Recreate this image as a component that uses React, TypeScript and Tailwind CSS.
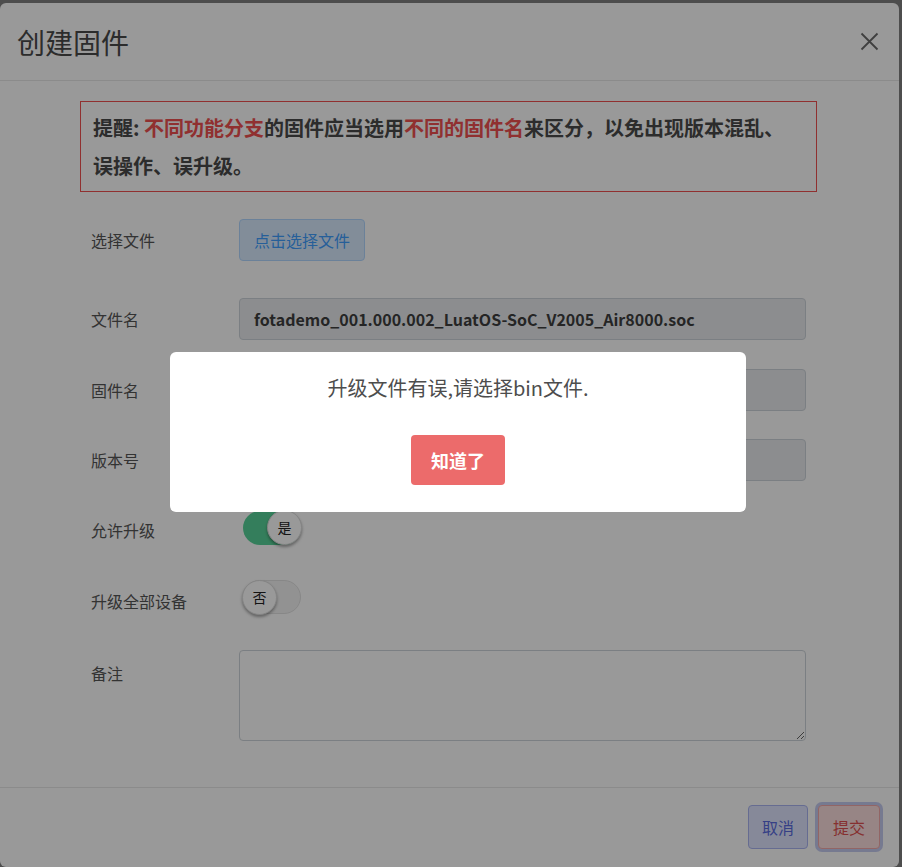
import { useState } from "react";

const rowLabel = "w-[148px] shrink-0 text-[16px] text-[#555]";

type ToggleProps = {
  on: boolean;
  text: string;
};

const Toggle = ({ on, text }: ToggleProps) => {
  return (
    <div
      className={`relative ml-[4px] h-[34px] w-[58px] rounded-full ${
        on ? "bg-[#58d399]" : "border border-[#e2e2e2] bg-[#f4f4f4]"
      }`}
    >
      <div
        className={`absolute top-[-1px] flex h-[35px] w-[35px] items-center justify-center rounded-full border border-[#dcdcdc] bg-white text-[14px] text-[#222] shadow-[0_2px_3px_rgba(0,0,0,0.35)] ${
          on ? "right-[-1px]" : "left-[-2px]"
        }`}
      >
        {text}
      </div>
    </div>
  );
};

const App = () => {
  const [note, setNote] = useState("");

  return (
    <div className="relative h-[867px] w-[902px] overflow-hidden bg-[#808080] font-['Noto_Sans_CJK_SC',sans-serif]">
      {/* modal */}
      <div className="mt-[3px] flex h-[864px] w-[899px] flex-col rounded-[6px] bg-white">
        <div className="flex h-[78px] shrink-0 items-center justify-between border-b border-[#e8e8e8] pl-[17px] pr-[20px]">
          <h4 className="text-[28px] leading-none text-[#4a4a4a]">创建固件</h4>
          <svg width="19" height="19" viewBox="0 0 19 19" className="text-[#6a6a6a]">
            <path d="M1.5 1.5 L17.5 17.5 M17.5 1.5 L1.5 17.5" stroke="currentColor" strokeWidth="1.8" fill="none" />
          </svg>
        </div>

        <div className="flex-1 pl-[80px] pr-[82px] pt-[20px]">
          <div className="border border-[#f05050] pb-[6px] pl-[12px] pr-[20px] pt-[7px] text-[20px] font-bold leading-[38px] text-[#4a4a4a]">
            提醒: <span className="text-[#f05050]">不同功能分支</span>的固件应当选用
            <span className="text-[#f05050]">不同的固件名</span>来区分，以免出现版本混乱、误操作、误升级。
          </div>

          <div className="px-[11px]">
            <div className="mt-[27px] flex h-[42px] items-center">
              <label className={rowLabel}>选择文件</label>
              <button className="h-[42px] rounded-[4px] border border-[#b3d8ff] bg-[#d9ecff] px-[14px] text-[16px] text-[#409eff]">
                点击选择文件
              </button>
            </div>

            <div className="mt-[37px] flex h-[42px] items-center">
              <label className={rowLabel}>文件名</label>
              <input
                readOnly
                value="fotademo_001.000.002_LuatOS-SoC_V2005_Air8000.soc"
                className="h-[42px] flex-1 rounded-[4px] border border-[#ced4da] bg-[#e9ecef] px-[14px] text-[16px] font-bold text-[#3f3f3f] outline-none"
              />
            </div>

            <div className="mt-[29px] flex h-[42px] items-center">
              <label className={rowLabel}>固件名</label>
              <input
                readOnly
                value=""
                className="h-[42px] flex-1 rounded-[4px] border border-[#ced4da] bg-[#e9ecef] px-[14px] text-[16px] outline-none"
              />
            </div>

            <div className="mt-[28px] flex h-[42px] items-center">
              <label className={rowLabel}>版本号</label>
              <input
                readOnly
                value=""
                className="h-[42px] flex-1 rounded-[4px] border border-[#ced4da] bg-[#e9ecef] px-[14px] text-[16px] outline-none"
              />
            </div>

            <div className="mt-[29px] flex h-[36px] items-center">
              <label className={`${rowLabel} pt-[4px]`}>允许升级</label>
              <Toggle on text="是" />
            </div>

            <div className="mt-[33px] flex h-[36px] items-center">
              <label className={`${rowLabel} pt-[8px]`}>升级全部设备</label>
              <Toggle on={false} text="否" />
            </div>

            <div className="mt-[35px] flex">
              <label className={`${rowLabel} pt-[11px]`}>备注</label>
              <textarea
                value={note}
                onChange={(e) => setNote(e.target.value)}
                className="h-[91px] flex-1 rounded-[4px] border border-[#ced4da] bg-white px-[12px] py-[6px] text-[16px] outline-none"
              />
            </div>
          </div>
        </div>

        <div className="flex h-[80px] shrink-0 items-center justify-end gap-[10px] border-t border-[#e8e8e8] pb-[2px] pr-[19px]">
          <button className="h-[44px] rounded-[4px] border border-[#aab4f2] bg-[#e0e5ff] px-[13px] text-[16px] text-[#5a6be0]">
            取消
          </button>
          <button className="h-[44px] rounded-[4px] border border-[#f3a9a9] bg-[#fcdede] px-[14px] text-[16px] text-[#e05050] shadow-[0_0_0_3px_rgba(150,160,230,0.55)]">
            提交
          </button>
        </div>
      </div>

      {/* dim layer */}
      <div className="absolute inset-0 bg-black/40" />

      {/* message box */}
      <div className="absolute left-[170px] top-[352px] flex h-[160px] w-[576px] flex-col items-center rounded-[6px] bg-white pt-[22px]">
        <p className="text-[20px] leading-[28px] text-[#4d4d4d]">升级文件有误,请选择bin文件.</p>
        <button className="mt-[33px] h-[50px] w-[94px] rounded-[4px] bg-[#ec6b6b] text-[18px] font-bold text-white">
          知道了
        </button>
      </div>
    </div>
  );
};

export default App;
